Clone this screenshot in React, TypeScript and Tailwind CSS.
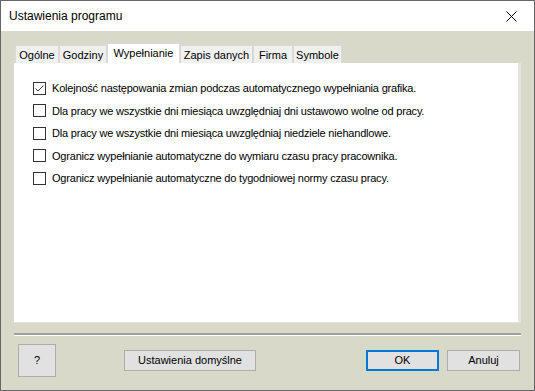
import React from "react";

const tabs = [
  { label: "Ogólne", width: "w-[44px]" },
  { label: "Godziny", width: "w-[48px]" },
  { label: "Wypełnianie", width: "w-[73px]", active: true },
  { label: "Zapis danych", width: "w-[73px]" },
  { label: "Firma", width: "w-[40px]" },
  { label: "Symbole", width: "w-[49px]" },
];

const options = [
  { label: "Kolejność następowania zmian podczas automatycznego wypełniania grafika.", checked: true },
  { label: "Dla pracy we wszystkie dni miesiąca uwzględniaj dni ustawowo wolne od pracy.", checked: false },
  { label: "Dla pracy we wszystkie dni miesiąca uwzględniaj niedziele niehandlowe.", checked: false },
  { label: "Ogranicz wypełnianie automatyczne do wymiaru czasu pracy pracownika.", checked: false },
  { label: "Ogranicz wypełnianie automatyczne do tygodniowej normy czasu pracy.", checked: false },
];

function CheckBox({ checked }: { checked: boolean }): React.JSX.Element {
  return (
    <div className="w-[13px] h-[13px] border border-[#333333] bg-white shrink-0 flex items-center justify-center">
      {checked && (
        <svg width="11" height="11" viewBox="0 0 11 11">
          <path d="M1.5 5.5 L4 8 L9.5 2.5" fill="none" stroke="#333333" strokeWidth="1" />
        </svg>
      )}
    </div>
  );
}

export default function App(): React.JSX.Element {
  return (
    <div
      className="w-[535px] h-[391px] border border-[#666666] flex flex-col bg-[#d9d9c9] text-black"
      style={{ fontFamily: '"Liberation Sans", Arial, sans-serif' }}
    >
      {/* Title bar */}
      <div className="h-[30px] bg-white flex items-center justify-between pl-[8px] pr-[17px] shrink-0">
        <span className="text-[12px]">Ustawienia programu</span>
        <svg width="11" height="11" viewBox="0 0 11 11" className="mt-[1px]">
          <path d="M0.5 0.5 L10.5 10.5 M10.5 0.5 L0.5 10.5" stroke="#000" strokeWidth="1" />
        </svg>
      </div>

      {/* Body */}
      <div className="flex-1 flex flex-col px-[13px] pt-[12px]">
        {/* Tabs */}
        <div className="flex items-end h-[20px] pl-[1px]">
          {tabs.map((tab) => (
            <div
              key={tab.label}
              className={`${tab.width} ${
                tab.active ? "h-[20px] bg-white pt-[3px]" : "h-[18px] bg-[#f0f0f0] pt-[3px]"
              } border border-b-0 border-[#d9d9d9] flex justify-center text-[11px] leading-[13px] whitespace-nowrap`}
            >
              {tab.label}
            </div>
          ))}
        </div>

        {/* Panel */}
        <div className="h-[260px] bg-white border-r-[3px] border-b border-[#e3e3e3] flex flex-col pt-[14px] pl-[19px]">
          {options.map((opt) => (
            <div key={opt.label} className="h-[22.5px] flex items-center gap-[6px] text-[11px] tracking-[-0.2px]">
              <CheckBox checked={opt.checked} />
              <span>{opt.label}</span>
            </div>
          ))}
        </div>

        {/* Separator */}
        <div className="mt-[10px] h-[3px] border-t-2 border-[#a0a0a0] bg-white" />

        {/* Buttons */}
        <div className="flex items-center mt-[8px] pl-[4px] pr-[1px]">
          <button className="w-[38px] h-[33px] bg-[#e1e1e1] border border-[#adadad] text-[11px]">?</button>
          <button className="ml-[68px] w-[132px] h-[21px] bg-[#e1e1e1] border border-[#adadad] text-[11px]">
            Ustawienia domyślne
          </button>
          <div className="flex-1" />
          <button className="w-[73px] h-[21px] bg-[#e1e1e1] border-2 border-[#0078d7] text-[11px]">OK</button>
          <button className="ml-[8px] w-[73px] h-[21px] bg-[#e1e1e1] border border-[#adadad] text-[11px]">
            Anuluj
          </button>
        </div>
      </div>
    </div>
  );
}
